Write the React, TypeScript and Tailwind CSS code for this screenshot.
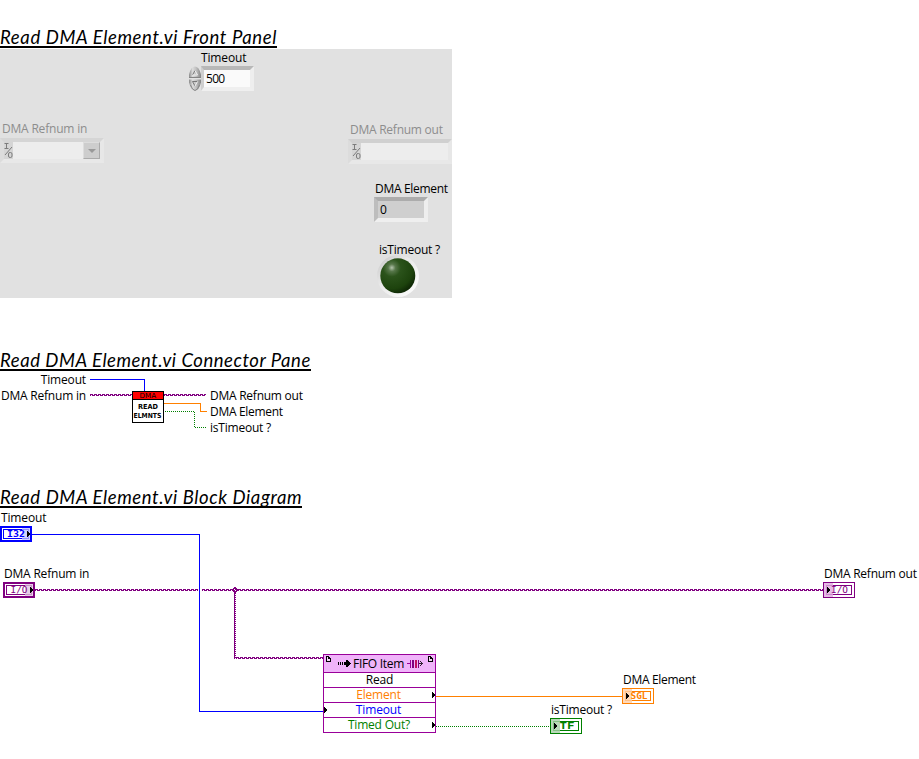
import type { ReactNode } from "react";

function Title({ children, className }: { children: ReactNode; className: string }) {
  return (
    <h2
      className={`h-[24px] overflow-hidden whitespace-nowrap border-b-2 border-black font-['Lato',sans-serif] text-[18.5px] italic leading-[27px] text-black ${className}`}
    >
      {children}
    </h2>
  );
}

function Label({ children, className }: { children: ReactNode; className: string }) {
  return (
    <div
      className={`whitespace-nowrap font-['Open_Sans','Noto_Sans',sans-serif] text-[12px] leading-[16px] ${className}`}
    >
      {children}
    </div>
  );
}

function PixelText({
  x,
  y,
  width,
  size = 8,
  fill,
  weight = 700,
  family = "'DejaVu Sans Mono', monospace",
  children,
}: {
  x: number;
  y: number;
  width: number;
  size?: number;
  fill: string;
  weight?: number;
  family?: string;
  children: string;
}) {
  return (
    <text
      x={x}
      y={y}
      textLength={width}
      lengthAdjust="spacingAndGlyphs"
      fontFamily={family}
      fontSize={size}
      fontWeight={weight}
      fill={fill}
    >
      {children}
    </text>
  );
}

// Refnum wires are braided: two pixel rows that step up and down every four pixels.
function WirePattern({ id }: { id: string }) {
  return (
    <defs>
      <pattern id={id} width="4" height="2" patternUnits="userSpaceOnUse">
        <path d="M0 0h3v1H0zM2 1h2v1H2zM0 1h1v1H0z" fill="#800080" />
      </pattern>
    </defs>
  );
}

function Braid({ x, y, width, id }: { x: number; y: number; width: number; id: string }) {
  return (
    <g transform={`translate(${x} ${y})`}>
      <rect width={width} height="2" fill={`url(#${id})`} />
    </g>
  );
}

function IoGlyph() {
  return (
    <div className="h-full w-[9px] bg-[#d5d5d5]">
      <svg width="9" height="17" viewBox="0 0 9 17" fill="none" stroke="#7c7c7c">
        <path d="M0.500 1.500h4M2.500 1.500v5M0.500 6.500h4M1 13L8 5" />
        <rect x="4.500" y="10.500" width="3.500" height="5" rx="1.500" />
      </svg>
    </div>
  );
}

function Stepper() {
  return (
    <svg className="ml-px" width="12" height="25" viewBox="0 0 12 25">
      <defs>
        <linearGradient id="knob" x1="0" x2="1">
          <stop offset="0" stopColor="#8a8a8a" />
          <stop offset=".3" stopColor="#dcdcdc" />
          <stop offset=".6" stopColor="#c0c0c0" />
          <stop offset="1" stopColor="#858585" />
        </linearGradient>
      </defs>
      <path d="M0 11.500V8.500Q2 .5 6 .5T12 8.500V11.500Z" fill="url(#knob)" />
      <path d="M0 13.500H12V16.500Q10 24.500 6 24.500T0 16.500Z" fill="url(#knob)" />
      <path d="M0 11.500h12M1.500 19Q3.500 24.500 6 24.500T10.500 19" stroke="#848484" fill="none" />
      <path d="M3.500 9L6 4.500M3.500 15.500H8.500M3.500 15.500L6 20" stroke="#777" fill="none" />
      <path d="M6 4.500L8.500 9H3.500M8.500 15.500L6 20" stroke="#f0f0f0" fill="none" />
    </svg>
  );
}

function Led() {
  return (
    <svg className="-mt-[4px] ml-[27px]" width="46" height="44" viewBox="0 0 46 44">
      <defs>
        <radialGradient id="led" cx=".33" cy=".27" r=".75">
          <stop offset="0" stopColor="#b5c4ad" />
          <stop offset=".14" stopColor="#57774a" />
          <stop offset=".34" stopColor="#2b531b" />
          <stop offset=".8" stopColor="#1d430d" />
          <stop offset="1" stopColor="#102a06" />
        </radialGradient>
        <linearGradient id="ring" x1="0" y1="0" x2="1" y2="1">
          <stop offset="0" stopColor="#c5c5c5" />
          <stop offset=".4" stopColor="#e9e9e9" />
          <stop offset="1" stopColor="#ffffff" />
        </linearGradient>
      </defs>
      <circle cx="23" cy="22" r="21" fill="url(#ring)" />
      <circle cx="22.800" cy="21.800" r="17.500" fill="url(#led)" />
    </svg>
  );
}

function FrontPanel() {
  return (
    <div className="flex h-[249px] w-[452px] items-start overflow-hidden bg-[#e1e1e1]">
      <div className="w-[188px] pt-[72px]">
        <Label className="pl-[2px] tracking-[-0.2px] text-[#8d8d8d]">DMA Refnum in</Label>
        <div className="mt-px flex h-[25px] w-[104px] border-4 border-b-[#e8e8e8] border-l-[#dcdcdc] border-r-[#e7e7e7] border-t-[#d5d5d5] bg-[#ededed]">
          <IoGlyph />
          <div className="ml-auto flex h-full w-[17px] items-center justify-center border border-b-[#aaa] border-l-[#ddd] border-r-[#aaa] border-t-[#ddd] bg-[#cdcdcd]">
            <svg width="8" height="4" viewBox="0 0 8 4">
              <path d="M0 0h8L4 4z" fill="#999" />
            </svg>
          </div>
        </div>
      </div>

      <div className="w-[160px] pt-px">
        <Label className="pl-[13px] tracking-[-0.15px]">Timeout</Label>
        <div className="flex">
          <Stepper />
          <div className="flex h-[25px] w-[53px] items-center border-4 border-b-[#efefef] border-l-[#cfcfcf] border-r-[#eeeeee] border-t-[#b8b8b8] border-l-3 bg-[#fafafa]">
            <Label className="pl-[2px] tracking-[-0.7px]">500</Label>
          </div>
        </div>
      </div>

      <div className="w-[104px] pt-[73px]">
        <Label className="pl-[2px] tracking-[-0.25px] text-[#8d8d8d]">DMA Refnum out</Label>
        <div className="mt-px flex h-[25px] w-[104px] border-4 border-b-[#e8e8e8] border-l-[#dcdcdc] border-r-[#e7e7e7] border-t-[#d0d0d0] bg-[#ededed]">
          <IoGlyph />
        </div>
        <Label className="mt-[17px] pl-[27px] tracking-[-0.3px]">DMA Element</Label>
        <div className="ml-[26px] flex h-[25px] w-[54px] items-center border-4 border-b-[#efefef] border-l-[#bdbdbd] border-r-[#eeeeee] border-t-[#acacac] bg-[#cfcfcf]">
          <Label className="pl-[2px]">0</Label>
        </div>
        <Label className="mt-[20px] pl-[31px] tracking-[-0.22px]">isTimeout ?</Label>
        <Led />
      </div>
    </div>
  );
}

function ConnectorPane() {
  const sans = "'DejaVu Sans', sans-serif";
  return (
    <div className="flex h-[69px] w-[452px] items-start">
      <div className="flex w-[86px] flex-col items-end pt-px">
        <Label className="tracking-[-0.15px]">Timeout</Label>
        <Label className="tracking-[-0.2px]">DMA Refnum in</Label>
      </div>
      <svg
        width="124"
        height="69"
        viewBox="86 371 124 69"
        fill="none"
        shapeRendering="crispEdges"
      >
        <WirePattern id="pane-braid" />
        <path d="M90 379.500H144.500V391" stroke="#0000ff" />
        <Braid id="pane-braid" x={90} y={394} width={42} />
        <Braid id="pane-braid" x={164} y={394} width={42} />
        <path d="M164 403.500H200.500V411.500H207" stroke="#ff8000" />
        <path d="M165 411.500H194.500V427.500H207" stroke="#008000" strokeDasharray="1 1" />
        <rect x="132.500" y="391.500" width="31" height="31" fill="#fff" stroke="#000" />
        <rect x="133" y="392" width="30" height="7" fill="#ff0000" />
        <path d="M133 399.500h30" stroke="#000" />
        <PixelText x={139.5} y={398} width={16.5} size={7} weight={400} family={sans} fill="#000">DMA</PixelText>
        <PixelText x={138} y={409} width={20} size={7} weight={700} family={sans} fill="#000">READ</PixelText>
        <PixelText x={133.5} y={418} width={28} size={7} weight={700} family={sans} fill="#000">ELMNTS</PixelText>
      </svg>
      <div className="flex flex-col pt-[17px]">
        <Label className="tracking-[-0.25px]">DMA Refnum out</Label>
        <Label className="tracking-[-0.3px]">DMA Element</Label>
        <Label className="tracking-[-0.22px]">isTimeout ?</Label>
      </div>
    </div>
  );
}

type TerminalProps = {
  x: number;
  y: number;
  color: string;
  tint: string;
  text: string;
  textX: number;
  textWidth: number;
  weight?: number;
};

function Control({ x, y, color, tint, text, textX, textWidth, weight = 700 }: TerminalProps) {
  return (
    <g>
      <rect x={x + 1} y={y + 1} width="30" height="14" fill="#fff" stroke={color} strokeWidth="2" />
      <rect x={x + 3.5} y={y + 3.5} width="25" height="9" stroke={color} />
      <rect x={x + 22} y={y + 2} width="8" height="12" fill={tint} fillOpacity=".75" />
      <PixelText x={x + textX} y={y + 11} width={textWidth} fill={color} weight={weight}>{text}</PixelText>
      <path d={`M${x + 27} ${y + 5}v6h1v-1h1v-1h1v-2h-1v-1h-1v-1z`} fill="#000" />
    </g>
  );
}

function Indicator({ x, y, color, tint, text, textX, textWidth, weight = 700 }: TerminalProps) {
  return (
    <g>
      <rect x={x + 0.5} y={y + 0.5} width="31" height="15" fill="#fff" stroke={color} />
      <rect x={x + 3.5} y={y + 3.5} width="25" height="9" stroke={color} />
      <rect x={x + 1} y={y + 1} width="9" height="14" fill={tint} fillOpacity=".8" />
      <PixelText x={x + textX} y={y + 11} width={textWidth} fill={color} weight={weight}>{text}</PixelText>
      <path d={`M${x + 4} ${y + 5}v6h1v-1h1v-1h1v-2h-1v-1h-1v-1z`} fill="#000" />
    </g>
  );
}

function NodeRow({ children, className }: { children: ReactNode; className: string }) {
  return (
    <div
      className={`flex h-[15px] items-center justify-center border-t border-[#990099] font-['Open_Sans',sans-serif] text-[12px] leading-[14px] ${className}`}
    >
      {children}
    </div>
  );
}

function FifoNode() {
  return (
    <div className="absolute left-[323px] top-[146px] flex h-[79px] w-[113px] flex-col border border-[#990099] bg-white">
      <div className="flex h-[17px] items-center bg-[#f0b4fa] pl-[14px] font-['Open_Sans',sans-serif] text-[12px] leading-[16px]">
        <svg width="13" height="7" viewBox="0 0 13 7" shapeRendering="crispEdges">
          <path d="M0 2h1v3H0zM2 2h1v3H2zM4 2h1v3H4zM6 2h2V0h2v1h1v1h1v1h1v1h-1v1h-1v1h-1v1H8V5H6z" fill="#000" />
        </svg>
        <span className="w-[56px] whitespace-nowrap pl-[2px] tracking-[-0.3px]">FIFO Item</span>
        <svg width="16" height="10" viewBox="0 0 16 10" fill="none" shapeRendering="crispEdges">
          <path d="M0 4.500h3M3.500 1v8" stroke="#990099" />
          <path d="M6 1v8" stroke="#800080" strokeWidth="2" />
          <path d="M9 1v8" stroke="#c01060" strokeWidth="2" />
          <path d="M11.500 1v8" stroke="#800080" />
          <path d="M12 4.500h4M14.500 3v3M13.500 2v1M13.500 6v1" stroke="#302030" />
        </svg>
      </div>
      <NodeRow className="tracking-[-0.15px] text-black">Read</NodeRow>
      <NodeRow className="pr-[2px] tracking-[-0.2px] text-[#ff8000]">Element</NodeRow>
      <NodeRow className="pr-[2px] tracking-[-0.15px] text-[#0000ff]">Timeout</NodeRow>
      <NodeRow className="pr-[1px] tracking-[-0.2px] text-[#008000]">Timed Out?</NodeRow>
    </div>
  );
}

function BlockDiagram() {
  return (
    <div className="relative h-[251px] w-[919px] overflow-hidden">
      <Label className="absolute left-[1px] top-[2px] tracking-[-0.15px]">Timeout</Label>
      <Label className="absolute left-[4px] top-[58px] tracking-[-0.2px]">DMA Refnum in</Label>
      <Label className="absolute left-[824px] top-[58px] tracking-[-0.25px]">DMA Refnum out</Label>
      <Label className="absolute left-[623px] top-[164px] tracking-[-0.3px]">DMA Element</Label>
      <Label className="absolute left-[551px] top-[194px] tracking-[-0.22px]">isTimeout ?</Label>
      <FifoNode />
      <svg
        className="absolute left-0 top-0"
        width="919"
        height="251"
        viewBox="0 508 919 251"
        fill="none"
        shapeRendering="crispEdges"
      >
        <WirePattern id="diagram-braid" />
        <path d="M32 534.500H199.500V711.500H323" stroke="#0000ff" />
        <Braid id="diagram-braid" x={35} y={589} width={163} />
        <Braid id="diagram-braid" x={202} y={589} width={622} />
        <path d="M234.500 591V659" stroke="#800080" />
        <path d="M235.500 591V658" stroke="#800080" strokeDasharray="1 1" />
        <Braid id="diagram-braid" x={236} y={657} width={87} />
        <path d="M234 587h2v1h1v1h1v2h-1v1h-1v1h-2v-1h-1v-1h-1v-2h1v-1h1z" fill="#800080" />
        <path d="M234 589h1v1h-1zM235 590h1v1h-1z" fill="#fff" />
        <path d="M436 696.500H623" stroke="#ff8000" />
        <path d="M436 726.500H550" stroke="#008000" strokeDasharray="1 1" />
        <g fill="#000">
          <path d="M432 692v6h1v-1h1v-1h1v-2h-1v-1h-1v-1z" />
          <path d="M324 707v6h1v-1h1v-1h1v-2h-1v-1h-1v-1z" />
          <path d="M432 722v6h1v-1h1v-1h1v-2h-1v-1h-1v-1z" />
        </g>
        <path d="M326.500 656.500h2v2h2v3h-4zM428.500 656.500h2v2h2v3h-4z" fill="#f6d4fa" stroke="#000" />
        <path d="M329 657h1v1h-1zM431 657h1v1h-1z" fill="#000" />
        <Control x={0} y={526} color="#0000ff" tint="#c0c0ff" text="I32" textX={7} textWidth={18} />
        <Control x={3} y={582} color="#800080" tint="#dfbfdf" text="I/O" textX={7.5} textWidth={17} weight={400} />
        <Indicator x={823} y={582} color="#800080" tint="#dfaadf" text="I/O" textX={8} textWidth={17} weight={400} />
        <Indicator x={622} y={688} color="#ff8000" tint="#ffd0a8" text="SGL" textX={8.5} textWidth={17} />
        <Indicator x={550} y={718} color="#008000" tint="#a8d0a8" text="TF" textX={9.5} textWidth={15} />
      </svg>
    </div>
  );
}

export default function App() {
  return (
    <main className="flex h-[759px] w-[919px] flex-col overflow-hidden bg-white pt-[24px] text-black">
      <section>
        <Title className="w-[277px] tracking-[0.62px]">Read DMA Element.vi Front Panel</Title>
        <div className="pt-px">
          <FrontPanel />
        </div>
      </section>
      <section className="pt-[49px]">
        <Title className="w-[311px] tracking-[0.54px]">Read DMA Element.vi Connector Pane</Title>
        <ConnectorPane />
      </section>
      <section className="pt-[44px]">
        <Title className="w-[302px] tracking-[0.6px]">Read DMA Element.vi Block Diagram</Title>
        <BlockDiagram />
      </section>
    </main>
  );
}
